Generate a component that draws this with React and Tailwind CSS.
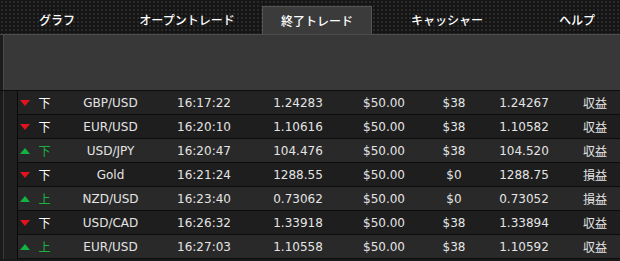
import React from 'react';

const TABS = ['グラフ', 'オープントレード', '終了トレード', 'キャッシャー', 'ヘルプ'];
const ACTIVE_TAB = 2;

// dir: 'down' | 'up', label color follows the screenshot as-is
const TRADES = [
  { dir: 'down', label: '下', green: false, pair: 'GBP/USD', time: '16:17:22', open: '1.24283', amount: '$50.00', payout: '$38', close: '1.24267', result: '収益' },
  { dir: 'down', label: '下', green: false, pair: 'EUR/USD', time: '16:20:10', open: '1.10616', amount: '$50.00', payout: '$38', close: '1.10582', result: '収益' },
  { dir: 'up', label: '下', green: true, pair: 'USD/JPY', time: '16:20:47', open: '104.476', amount: '$50.00', payout: '$38', close: '104.520', result: '収益' },
  { dir: 'down', label: '下', green: false, pair: 'Gold', time: '16:21:24', open: '1288.55', amount: '$50.00', payout: '$0', close: '1288.75', result: '損益' },
  { dir: 'up', label: '上', green: true, pair: 'NZD/USD', time: '16:23:40', open: '0.73062', amount: '$50.00', payout: '$0', close: '0.73052', result: '損益' },
  { dir: 'down', label: '下', green: false, pair: 'USD/CAD', time: '16:26:32', open: '1.33918', amount: '$50.00', payout: '$38', close: '1.33894', result: '収益' },
  { dir: 'up', label: '上', green: true, pair: 'EUR/USD', time: '16:27:03', open: '1.10558', amount: '$50.00', payout: '$38', close: '1.10592', result: '収益' }
];

const Arrow = ({ dir }) =>
  dir === 'down' ? (
    <span className="inline-block w-0 h-0 border-l-[5px] border-r-[5px] border-t-[6px] border-l-transparent border-r-transparent border-t-[#e0141c]" />
  ) : (
    <span className="inline-block w-0 h-0 border-l-[5px] border-r-[5px] border-b-[6px] border-l-transparent border-r-transparent border-b-[#12b243]" />
  );

const rowBg = (i) => {
  if (i === 0) return 'bg-[#232323]';
  return i % 2 === 0 ? 'bg-[#292929]' : 'bg-[#1e1e1e]';
};

export default function App() {
  return (
    <div className="w-[620px] h-[261px] overflow-hidden bg-[#1a1a1a] text-[#e4e4e4] font-['DejaVu_Sans','Noto_Sans_CJK_JP',sans-serif]">
      {/* タブバー */}
      <div className="h-[34px] flex pl-[2px] pt-[6px] gap-[20px] bg-[#151515] bg-[radial-gradient(circle,#2b2b2b_1px,transparent_1.2px)] bg-[length:4px_4px]">
        {TABS.map((t, i) => (
          <div
            key={t}
            className={`w-[110px] h-[28px] shrink-0 flex items-center justify-center text-[12px] text-white font-['Noto_Sans_CJK_JP',sans-serif] font-medium ${
              i === ACTIVE_TAB ? 'bg-[#3b3b3b] border border-b-0 border-[#555]' : ''
            }`}
          >
            {t}
          </div>
        ))}
      </div>
      <div className="h-px bg-[#4d4d4d]" />

      {/* ヘッダーパネル */}
      <div className="flex h-[55px]">
        <div className="w-[3px] bg-[#1c1c1c]" />
        <div className="flex-1 bg-[#383838] border-l border-[#4a4a4a]" />
      </div>
      <div className="h-px bg-[#0c0c0c]" />

      {/* 取引テーブル */}
      <div className="flex">
        <div className="w-[18px] flex shrink-0">
          <div className="w-[3px] bg-[#1a1a1a]" />
          <div className="w-px bg-[#3a3a3a]" />
          <div className="flex-1 bg-[#1f1f1f] border-r border-[#0a0a0a]" />
        </div>
        <div className="flex-1">
          {TRADES.map((r, i) => (
            <div
              key={i}
              className={`h-[24px] border-b border-[#0c0c0c] grid grid-cols-[13px_27px_105px_82px_106px_66px_74px_66px_1fr] items-center text-[12px] text-center ${rowBg(i)}`}
            >
              <div className="flex justify-center pl-[1px]">
                <Arrow dir={r.dir} />
              </div>
              <div
                className={`font-['Noto_Sans_CJK_JP',sans-serif] ${
                  r.green ? 'text-[#19b33f]' : 'text-white'
                }`}
              >
                {r.label}
              </div>
              <div>{r.pair}</div>
              <div>{r.time}</div>
              <div>{r.open}</div>
              <div>{r.amount}</div>
              <div>{r.payout}</div>
              <div>{r.close}</div>
              <div className="pl-[13px] font-['Noto_Sans_CJK_JP',sans-serif]">{r.result}</div>
            </div>
          ))}
        </div>
      </div>
    </div>
  );
}
